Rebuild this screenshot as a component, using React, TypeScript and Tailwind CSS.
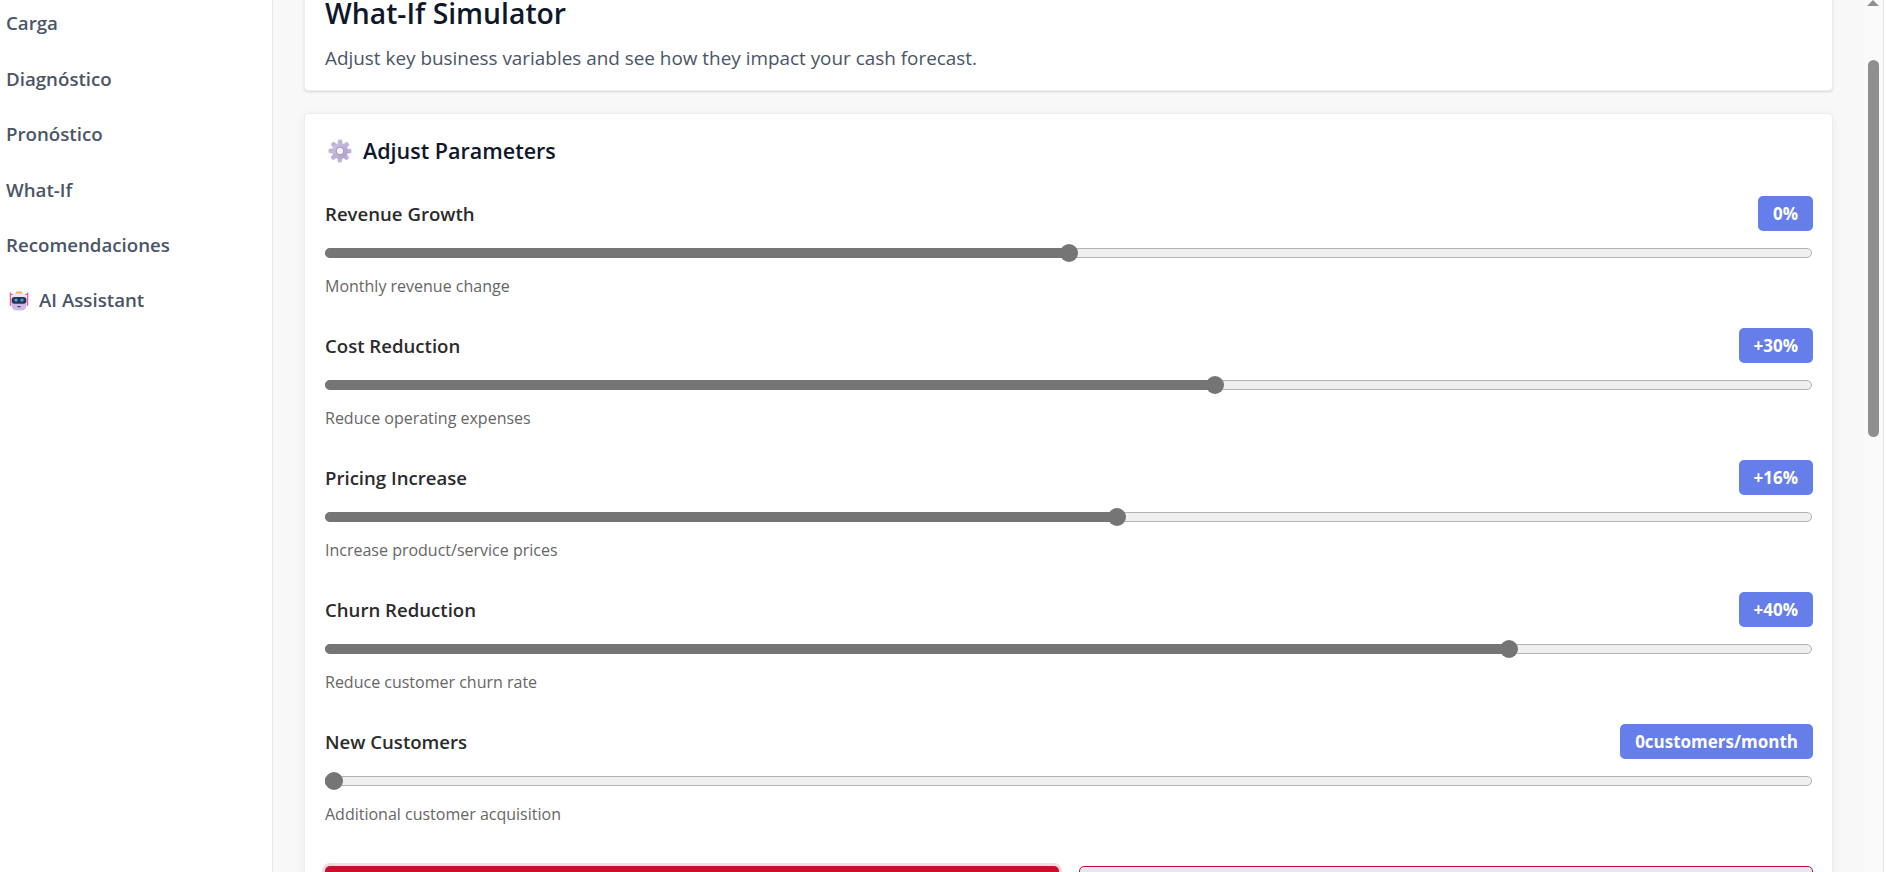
const FONT = "font-['Open_Sans','Noto_Sans',sans-serif]";

const navItems = ["Carga", "Diagnóstico", "Pronóstico", "What-If", "Recomendaciones"];

const sliders = [
  { label: "Revenue Growth", value: "0%", help: "Monthly revenue change", pct: 0.5 },
  { label: "Cost Reduction", value: "+30%", help: "Reduce operating expenses", pct: 0.6 },
  { label: "Pricing Increase", value: "+16%", help: "Increase product/service prices", pct: 0.5333 },
  { label: "Churn Reduction", value: "+40%", help: "Reduce customer churn rate", pct: 0.8 },
  { label: "New Customers", value: "0customers/month", help: "Additional customer acquisition", pct: 0 },
];

function GearIcon() {
  const teeth = [0, 45, 90, 135, 180, 225, 270, 315];
  return (
    <svg width="24" height="24" viewBox="0 0 24 24" className="shrink-0 ml-[3px]">
      <defs>
        <linearGradient id="gear" x1="0" y1="0" x2="1" y2="1">
          <stop offset="0" stopColor="#cfc6e6" />
          <stop offset="1" stopColor="#ab9bca" />
        </linearGradient>
      </defs>
      {teeth.map((a) => (
        <rect key={a} x="9.7" y="0.5" width="4.6" height="6" rx="1.4" fill="url(#gear)" transform={`rotate(${a} 12 12)`} />
      ))}
      <circle cx="12" cy="12" r="8" fill="url(#gear)" />
      <circle cx="12" cy="12" r="3.8" fill="#f6f4f9" />
      <circle cx="12" cy="12" r="3.8" fill="none" stroke="#8f8a9c" strokeWidth="0.8" />
    </svg>
  );
}

function RobotIcon() {
  return (
    <svg width="20" height="20" viewBox="0 0 22 22" className="shrink-0">
      <rect x="7.5" y="0.5" width="7" height="3" rx="1" fill="#f3b73f" />
      <rect x="0.8" y="1.5" width="1.4" height="15" rx="0.7" fill="#ee5f96" />
      <rect x="19.8" y="1.5" width="1.4" height="15" rx="0.7" fill="#ee5f96" />
      <rect x="1.5" y="3" width="3" height="1.6" fill="#ee5f96" />
      <rect x="17.5" y="3" width="3" height="1.6" fill="#ee5f96" />
      <rect x="2.5" y="2.5" width="17" height="19" rx="6" fill="#cdb8e6" />
      <rect x="3" y="2.8" width="16" height="8" rx="4" fill="#e9e6ef" />
      <rect x="3" y="6.5" width="16" height="7.5" rx="3" fill="#2b3350" />
      <rect x="6" y="8.5" width="3.4" height="3" rx="1" fill="#3ea6ee" />
      <rect x="12.6" y="8.5" width="3.4" height="3" rx="1" fill="#3ea6ee" />
      <rect x="9" y="16.5" width="4" height="1.4" rx="0.7" fill="#4a4a68" />
    </svg>
  );
}

function Slider({ label, value, help, pct }: (typeof sliders)[number]) {
  return (
    <div className="mb-[32px]">
      <div className="flex items-center justify-between h-[35px]">
        <span className="text-[18.6px] font-semibold text-[#2b2b2b]">{label}</span>
        <span className="h-[35px] flex items-center px-[15px] rounded-[5px] bg-[#667eea] text-white text-[17px] font-bold">
          {value}
        </span>
      </div>
      <div className="relative mt-[17px] mr-px h-[10px] rounded-full bg-[#efefef] border border-[#b2b2b2]">
        <div
          className="absolute -inset-y-px -left-px rounded-full bg-[#757575]"
          style={{ width: `calc(8px + (100% - 16px) * ${pct})` }}
        />
        <div
          className="absolute top-[-5px] -ml-[9px] size-[18px] rounded-full bg-[#757575]"
          style={{ left: `calc(8px + (100% - 16px) * ${pct})` }}
        />
      </div>
      <p className="mt-[18px] h-[20px] leading-[20px] text-[16px] text-[#666666]">{help}</p>
    </div>
  );
}

export default function App() {
  return (
    <div className={`${FONT} flex h-screen overflow-hidden bg-white`}>
      {/* Sidebar */}
      <aside className="w-[273px] shrink-0 bg-white border-r border-[#e5e5e5] pl-[6px] pt-[9px]">
        {navItems.map((item) => (
          <div key={item} className="h-[55.5px] leading-[28px] text-[18.7px] font-semibold text-[#4a5568]">
            {item}
          </div>
        ))}
        <div className="flex items-center gap-[10px] h-[28px] pl-[3px] text-[18.7px] font-semibold text-[#4a5568]">
          <RobotIcon />
          AI Assistant
        </div>
      </aside>

      {/* Main */}
      <main className="flex-1 min-w-0 overflow-hidden bg-[#f8f8f8] pl-[31px] pr-[30px]">
        <section className="-mt-[14px] h-[105px] bg-white rounded-[4px] border border-[#ececec] shadow-sm pl-[20px] pr-[19px] pt-[8px]">
          <h1 className="text-[28.3px] leading-[36px] font-semibold text-[#0f172a]">What-If Simulator</h1>
          <p className="mt-[14px] text-[18.9px] leading-[26px] text-[#4a5568]">
            Adjust key business variables and see how they impact your cash forecast.
          </p>
        </section>

        <section className="mt-[22px] bg-white rounded-[4px] border border-[#ececec] shadow-[0_2px_12px_rgba(0,0,0,0.05)] pl-[20px] pr-[19px] pt-[22px] pb-[20px]">
          <div className="flex items-center gap-[11px] h-[30px] mb-[30px]">
            <GearIcon />
            <h2 className="text-[21.5px] font-semibold text-[#0f172a]">Adjust Parameters</h2>
          </div>
          {sliders.map((s) => (
            <Slider key={s.label} {...s} />
          ))}
          <div className="grid grid-cols-2 gap-[20px] mt-[42px]">
            <button className="h-[50px] rounded-[5px] bg-[#c8102e] ring-[3px] ring-[#c8102e]/15" />
            <button className="h-[50px] rounded-[5px] bg-[#e2e8f0] border border-[#c8102e]" />
          </div>
        </section>
      </main>

      {/* Scrollbar */}
      <div className="w-[20px] shrink-0 bg-[#fafafa] flex flex-col items-center">
        <div className="size-0 border-x-[6px] border-x-transparent border-b-[6px] border-b-[#8f8f8f]" />
        <div className="mt-[54px] w-[11px] h-[377px] rounded-full bg-[#8f8f8f]" />
      </div>
      <div className="w-[4px] shrink-0 bg-white border-l border-[#e5e5e5]" />
    </div>
  );
}
